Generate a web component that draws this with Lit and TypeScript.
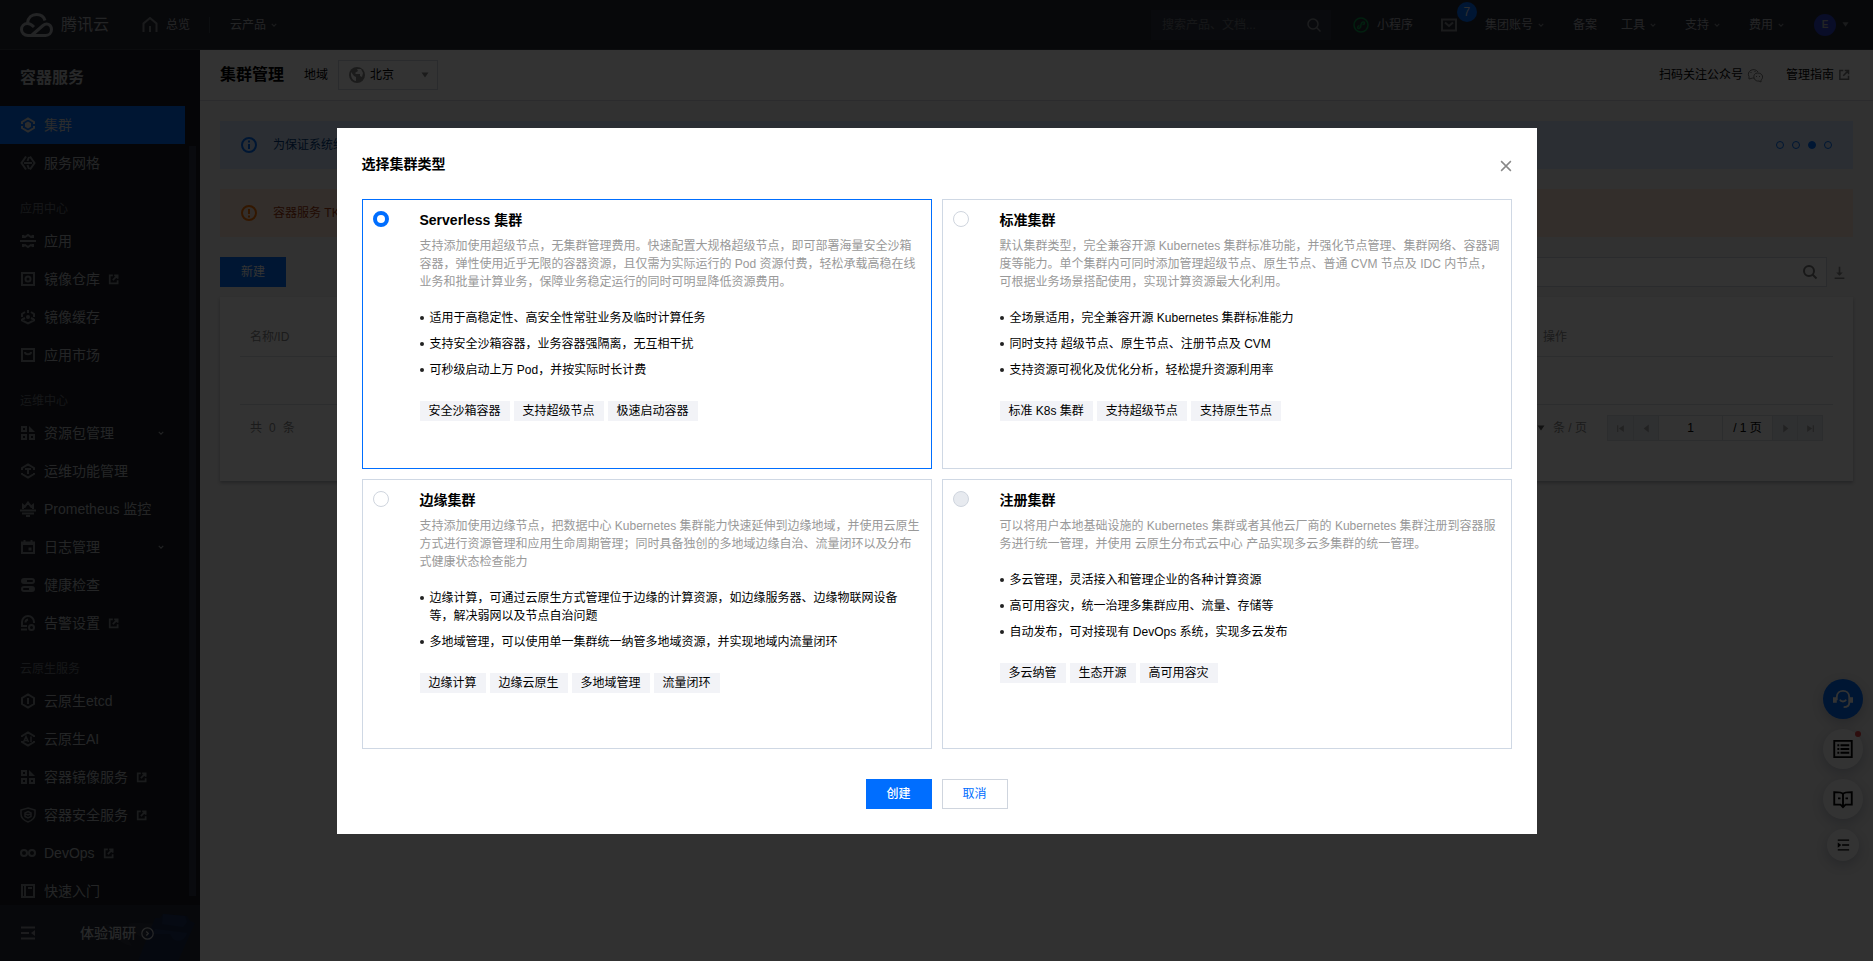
import { LitElement, html, css, svg, nothing, TemplateResult } from 'lit';
import { customElement, property, state } from 'lit/decorators.js';
import { classMap } from 'lit/directives/class-map.js';

const HEX = svg`<path d="M2 6V5l6-3.6L14 5v1M2 10v1l6 3.6 6-3.6v-1"/>`;
const GRID = svg`<path d="M2 2h4v4H2zM2 10h4v4H2zM10 10h4v4h-4z"/><path class="fill" d="M9 1l6 6H9z"/>`;

const ICONS: Record<string, unknown> = {
  cluster: svg`<path d="M2 7V5l6-3.6L14 5v2M2 9v2l6 3.6 6-3.6V9"/><path class="fill" d="M8 4.6l3 1.7v3.4l-3 1.7-3-1.7V6.3z"/>`,
  mesh: svg`<path d="M6 1.5L1.500 8 6 14.500M10 1.500L14.500 8 10 14.500M4 8h8M9 2L7.500 6M9 14l-1.500-4"/>`,
  app: svg`<path d="M0 8h16M3 2.500l2 1.500 3-2 3 2 2-1.500M3 5V2M13 5V2M3 13.500l2-1.500 3 2 3-2 2 1.500M3 11v3M13 11v3"/>`,
  registry: svg`<path d="M2 2h12v12H2z"/><circle cx="8" cy="8" r="2.5"/>`,
  cache: svg`<path d="M2 8V5l3-2M11 3l3 2v3M2 10.500L5 9M14 10.500L11 9M2 10v1.500l6 3 6-3V10M8 1v3"/><circle class="fill" cx="8" cy="8" r="2"/>`,
  market: svg`<path d="M2 2h12v12H2zM5 5c0 3 6 3 6 0"/>`,
  grid: GRID,
  ops: svg`${HEX}<path d="M2 5v2M14 5v2M5 6h6M8 6v5"/>`,
  prom: svg`<path d="M3 8V4l2 1.500L8 1.500 11 5.500 13 4v4M0 9.500h16M2 12.500h12M6 15h4"/>`,
  log: svg`<path d="M2 3.500h12V14H2zM4.500 1v3M11.500 1v3M2 5h12"/><path class="fill" d="M8.500 8.500h3v3h-3z"/>`,
  health: svg`<rect x="2" y="2" width="12" height="4" rx="2"/><rect x="2" y="10" width="12" height="4" rx="2"/><path d="M2 4h5M9 12h5"/>`,
  alarm: svg`<path d="M2 12V7a6 6 0 0 1 12 0v1M1 14.500h6M2 11h5M5.500 7.500A3 3 0 0 1 8 4.500"/><circle cx="11.500" cy="12.500" r="2.500"/>`,
  etcd: svg`${HEX}<path d="M2 5v6M14 5v6M8 5v6"/>`,
  ai: svg`${HEX}<path stroke-width="1.5" d="M3.500 11L6 5.500 8.500 11M4.500 9.500h3M11 5.500V11"/>`,
  shield: svg`<path stroke-width="1.5" d="M8 1l7 2v4c0 4-3 6.500-7 8-4-1.500-7-4-7-8V3z"/><path stroke-width="1.5" d="M8 4.500l3 1.500v3.500L8 11 5 9.500V6zM5 6.500L8 8l3-1.500"/>`,
  devops: svg`<circle cx="4" cy="8" r="3"/><circle cx="12" cy="8" r="3"/>`,
  start: svg`<path d="M2 2h12v12H2zM5 2v12M8 5h4"/>`,
  external: svg`<path d="M7 2H2.500v11.500H14V9M9 2h5v5M13.500 2.500L7 9"/>`,
  home: svg`<path d="M1.500 15V6.500L8 1l6.500 5.500V15M8 9v6"/>`,
  search: svg`<circle cx="7" cy="7" r="5"/><path d="M10.500 10.500L14.500 14.500"/>`,
  mail: svg`<path d="M1 2.500h14v11H1zM4 5.500l4 3.500 4-3.500"/>`,
  mini: svg`<circle cx="8" cy="8" r="7"/><path d="M6.500 8.500c-3 1-2 3.500-.500 3 2.500-.500 1.500-2 2-4 .500-3 3.500-3 3.500-1.500 0 1-1 1.500-2 1.500"/>`,
  info: svg`<circle cx="8" cy="8" r="7"/><path d="M8 3.500v2M8 7v5"/>`,
  warn: svg`<circle cx="8" cy="8" r="7"/><path d="M8 4v5M8 10.500v2"/>`,
  globe: svg`<circle class="fill" cx="8" cy="8" r="8"/><path class="cut" d="M2 5l3 4 2 1v4C4 13.500 1.500 11 2 5zM8 2h4l2 4-1 4-2-1V7H7l-1-1 3-2z"/>`,
  download: svg`<path d="M8 1v9M2 15h12"/><path class="fill" d="M4 8h8l-4 4z"/>`,
  wechat: svg`<path d="M7 11c-1 0-2 0-3 .5L2 12V9.500A5 4.500 0 1 1 11 5"/><path d="M10.500 6c6 0 6 5.500 3.500 7v2l-2-1c-6 1-7-8-1.500-8z"/><path d="M9.500 9v1M12.500 9v1M4 5v1M8 4v1"/>`,
  collapse: svg`<path d="M1 2.500h14M1 8h8M1 13.500h14"/><path class="fill" d="M15 5v6l-4-3z"/>`,
  expand: svg`<path d="M2 2.500h13M7 8h8M2 13.500h13"/><path class="fill" d="M2 5v6l4-3z"/>`,
  next: svg`<circle cx="8" cy="8" r="7"/><path d="M6.500 5.500L9 8l-2.500 2.500"/>`,
  chevron: svg`<path d="M2 5l6 6 6-6"/>`,
  close: svg`<path d="M1.500 1.500l13 13M14.500 1.500l-13 13"/>`,
  caret: svg`<path class="fill" d="M1 3h14l-7 10z"/>`,
  first: svg`<path d="M3 2v12"/><path class="fill" d="M14 2v12L5 8z"/>`,
  prev: svg`<path class="fill" d="M12 1v14L3 8z"/>`,
  following: svg`<path class="fill" d="M4 1v14l9-7z"/>`,
  last: svg`<path d="M13 2v12"/><path class="fill" d="M2 2v12l9-6z"/>`,
  headset: svg`<path d="M3 9V6.500C3 3 5.500 1.500 8 1.500s5 1.500 5 5V11c0 3-2 3.500-4.500 3.500M5.500 8.500c1 2 4 2 5 0"/><path class="fill" d="M0 6.500h3V11H0zM13 6.500h3V11h-3z"/>`,
  list: svg`<path d="M1 1.500h14v13H1zM3.500 5h1.500M6 5h7M3.500 8h1.500M6 8h7M3.500 11h1.500M6 11h7"/>`,
  book: svg`<path d="M8 4C7 2.500 5 2.500 1 2.500v10h5l2 2 2-2h5v-10c-4 0-6 0-7 1.500zM8 4v10M4 7.500h2M10 7.500h2"/>`,
};

@customElement('ui-icon')
export class UiIcon extends LitElement {
  @property() name = '';
  @property({ type: Number }) size = 16;
  @property({ type: Number }) weight = 2;

  static styles = css`
    :host { display: inline-flex; flex: none; }
    svg { display: block; fill: none; stroke: currentColor; }
    .fill { fill: currentColor; stroke: none; }
    .cut { fill: #fff; stroke: none; }
  `;

  render() {
    return html`<svg width=${this.size} height=${this.size} viewBox="0 0 16 16" stroke-width=${this.weight} aria-hidden="true">${ICONS[this.name]}</svg>`;
  }
}

interface NavItem { icon: string; text: string; external?: boolean; sub?: boolean; active?: boolean }
interface NavGroup { label?: string; items: NavItem[] }
interface ClusterType { id: string; title: string; desc: string; points: string[]; tags: string[]; disabled?: boolean }

const NAV: NavGroup[] = [
  { items: [
    { icon: 'cluster', text: '集群', active: true },
    { icon: 'mesh', text: '服务网格' },
  ] },
  { label: '应用中心', items: [
    { icon: 'app', text: '应用' },
    { icon: 'registry', text: '镜像仓库', external: true },
    { icon: 'cache', text: '镜像缓存' },
    { icon: 'market', text: '应用市场' },
  ] },
  { label: '运维中心', items: [
    { icon: 'grid', text: '资源包管理', sub: true },
    { icon: 'ops', text: '运维功能管理' },
    { icon: 'prom', text: 'Prometheus 监控' },
    { icon: 'log', text: '日志管理', sub: true },
    { icon: 'health', text: '健康检查' },
    { icon: 'alarm', text: '告警设置', external: true },
  ] },
  { label: '云原生服务', items: [
    { icon: 'etcd', text: '云原生etcd' },
    { icon: 'ai', text: '云原生AI' },
    { icon: 'grid', text: '容器镜像服务', external: true },
    { icon: 'shield', text: '容器安全服务', external: true },
    { icon: 'devops', text: 'DevOps', external: true },
    { icon: 'start', text: '快速入门' },
  ] },
];

const TYPES: ClusterType[] = [
  {
    id: 'serverless', title: 'Serverless 集群',
    desc: '支持添加使用超级节点，无集群管理费用。快速配置大规格超级节点，即可部署海量安全沙箱容器，弹性使用近乎无限的容器资源，且仅需为实际运行的 Pod 资源付费，轻松承载高稳在线业务和批量计算业务，保障业务稳定运行的同时可明显降低资源费用。',
    points: ['适用于高稳定性、高安全性常驻业务及临时计算任务', '支持安全沙箱容器，业务容器强隔离，无互相干扰', '可秒级启动上万 Pod，并按实际时长计费'],
    tags: ['安全沙箱容器', '支持超级节点', '极速启动容器'],
  },
  {
    id: 'standard', title: '标准集群',
    desc: '默认集群类型，完全兼容开源 Kubernetes 集群标准功能，并强化节点管理、集群网络、容器调度等能力。单个集群内可同时添加管理超级节点、原生节点、普通 CVM 节点及 IDC 内节点，可根据业务场景搭配使用，实现计算资源最大化利用。',
    points: ['全场景适用，完全兼容开源 Kubernetes 集群标准能力', '同时支持 超级节点、原生节点、注册节点及 CVM', '支持资源可视化及优化分析，轻松提升资源利用率'],
    tags: ['标准 K8s 集群', '支持超级节点', '支持原生节点'],
  },
  {
    id: 'edge', title: '边缘集群',
    desc: '支持添加使用边缘节点，把数据中心 Kubernetes 集群能力快速延伸到边缘地域，并使用云原生方式进行资源管理和应用生命周期管理；同时具备独创的多地域边缘自治、流量闭环以及分布式健康状态检查能力',
    points: ['边缘计算，可通过云原生方式管理位于边缘的计算资源，如边缘服务器、边缘物联网设备等，解决弱网以及节点自治问题', '多地域管理，可以使用单一集群统一纳管多地域资源，并实现地域内流量闭环'],
    tags: ['边缘计算', '边缘云原生', '多地域管理', '流量闭环'],
  },
  {
    id: 'registered', title: '注册集群', disabled: true,
    desc: '可以将用户本地基础设施的 Kubernetes 集群或者其他云厂商的 Kubernetes 集群注册到容器服务进行统一管理，并使用 云原生分布式云中心 产品实现多云多集群的统一管理。',
    points: ['多云管理，灵活接入和管理企业的各种计算资源', '高可用容灾，统一治理多集群应用、流量、存储等', '自动发布，可对接现有 DevOps 系统，实现多云发布'],
    tags: ['多云纳管', '生态开源', '高可用容灾'],
  },
];

@customElement('app-root')
export class AppRoot extends LitElement {
  @state() private selected = 'serverless';

  static styles = css`
    :host {
      display: flex;
      flex-direction: column;
      position: relative;
      height: 100vh;
      overflow: hidden;
      font: 12px/18px "Liberation Sans", "Noto Sans CJK SC", sans-serif;
      color: #000;
      background: #f2f2f2;
    }
    * { box-sizing: border-box; }
    a { color: inherit; text-decoration: none; }
    button, input, select { font: inherit; color: inherit; margin: 0; padding: 0; border: 0; border-radius: 0; background: none; outline: none; }
    select { appearance: none; }
    h1, h2, h3, p, ul { margin: 0; padding: 0; }
    ul { list-style: none; }

    .topbar { display: flex; align-items: center; flex: none; height: 50px; padding: 0 24px 0 20px; background: #262a36; color: #b0b2b8; border-bottom: 1px solid #373c48; }
    .brand { display: flex; align-items: center; gap: 8px; font-size: 16px; }
    .topbar .home { display: flex; align-items: center; gap: 8px; margin-left: 33px; }
    .home ui-icon, .mail ui-icon { color: #83868c; }
    .rule { width: 1px; height: 16px; margin: 0 20px 0 19px; background: #3f4553; }
    .drop { display: flex; align-items: center; gap: 5px; padding-right: 5px; }
    .drop ui-icon { color: #83868c; }
    .find { display: flex; align-items: center; width: 180px; height: 30px; margin-left: auto; padding: 0 9px 0 11px; background: #303642; }
    .find input { flex: 1; min-width: 0; }
    .find input::placeholder { color: #6e727b; opacity: 1; }
    .find ui-icon { color: #8a8d94; }
    .mini { display: flex; align-items: center; gap: 8px; margin: 0 28px 0 22px; }
    .mini ui-icon { color: #0a9b4c; }
    .mail { display: flex; position: relative; margin-right: 28px; }
    .badge { position: absolute; left: 16px; top: -15px; width: 20px; height: 20px; border-radius: 10px; background: #006eff; color: #e0e4ea; text-align: center; line-height: 20px; }
    .links { display: flex; gap: 24px; }
    .avatar { display: flex; align-items: center; gap: 6px; margin-left: 25px; }
    .avatar ui-icon { color: #83868c; }
    .avatar b { width: 22px; height: 22px; border-radius: 11px; background: #2d41c8; text-align: center; font-size: 10px; line-height: 22px; }

    .body { display: flex; flex: 1; min-height: 0; }
    .side { display: flex; flex-direction: column; flex: none; width: 200px; background: #191d24; color: #b6b9be; }
    .side h2 { flex: none; padding: 16px 20px 16px; font-size: 16px; line-height: 24px; color: #c4c6ca; }
    .nav { display: flex; flex: 1; min-height: 0; overflow: hidden; }
    .menu { flex: 1; }
    .track { width: 7px; margin: 40px 4px 9px 4px; background: #2d3346; }
    .group { padding: 18px 20px 4px; color: #6c7078; }
    .item { display: flex; align-items: center; gap: 8px; height: 38px; padding: 0 20px; font-size: 14px; }
    .item ui-icon { color: #83868c; }
    .item .more { margin-left: auto; margin-right: 1px; color: #a8abb0; }
    .item.active { background: #006eff; color: #d5d9de; }
    .item.active ui-icon { color: #d5d9de; }
    .foot { display: flex; align-items: center; flex: none; height: 56px; padding-left: 20px; background: #242837; position: relative; overflow: hidden; }
    .foot button { display: flex; color: #8a8d94; }
    .survey { display: flex; position: relative; align-items: center; gap: 5px; margin-left: 44px; font-size: 14px; font-weight: 500; z-index: 1; color: #c4c6ca; }
    .art { position: absolute; right: 0; bottom: 0; }

    .main { flex: 1; min-width: 0; }
    .head { display: flex; align-items: center; height: 51px; padding: 0 23px 0 20px; background: #fff; border-bottom: 1px solid #d5d8de; }
    .head h1 { font-size: 16px; line-height: 24px; margin-right: 20px; }
    .region { display: flex; align-items: center; width: 100px; height: 30px; margin-left: 10px; padding: 0 8px 0 10px; border: 1px solid #cfd5de; color: #000; }
    .region ui-icon { color: #888; }
    .region select { flex: 1; min-width: 0; margin-left: 5px; }
    .follow { display: flex; align-items: center; gap: 4px; margin-left: auto; }
    .guide { display: flex; align-items: center; gap: 4px; margin-left: 23px; }
    .follow ui-icon, .guide ui-icon { color: #777; }

    .content { display: flex; flex-direction: column; gap: 20px; padding: 20px; }
    .alert { display: flex; align-items: center; gap: 16px; height: 48px; padding: 0 21px; background: #d5e7ff; color: #003b80; }
    .alert ui-icon { color: #006eff; }
    .alert.orange { background: #ffe6d7; color: #a3380c; }
    .alert.orange ui-icon { color: #ff7200; }
    .dots { display: flex; gap: 8px; margin-left: auto; }
    .dots button { width: 8px; height: 8px; border: 1px solid #006eff; border-radius: 4px; }
    .dots .on { background: #006eff; }
    .tools { display: flex; align-items: center; gap: 6px; }
    .btn { width: 66px; height: 30px; border: 1px solid #cfd5de; text-align: center; color: #006eff; background: #fff; }
    .btn.primary { border-color: #006eff; background: #006eff; color: #fff; }
    .filter { display: flex; align-items: center; width: 420px; height: 30px; margin-left: auto; padding: 0 8px; border: 1px solid #cfd5de; background: #fff; }
    .filter input { flex: 1; min-width: 0; }
    .filter ui-icon { color: #777; }
    .tools > button:last-child { display: flex; margin-right: 7px; color: #888; }

    .panel { margin-top: -10px; padding: 20px 20px 30px; background: #fff; box-shadow: 0 2px 3px rgba(54, 58, 80, .32); }
    table { width: 100%; border-collapse: separate; border-spacing: 0; }
    th { height: 40px; padding: 0 10px; text-align: left; font-weight: 400; color: #888; border-bottom: 1px solid #dcdfe5; }
    .ops { width: 300px; }
    td { height: 48px; padding: 0; border-bottom: 1px solid #dcdfe5; }
    .pager { display: flex; align-items: center; padding: 10px; color: #888; }
    .total { display: flex; gap: 7px; }
    .size { display: flex; align-items: center; gap: 3px; margin-left: auto; }
    .size ui-icon { color: #555; margin-right: 5px; }
    .pages { display: flex; height: 26px; margin-left: 20px; border: 1px solid #dcdfe5; color: #000; }
    .pages > * { border-left: 1px solid #dcdfe5; }
    .pages > :first-child { border-left: 0; }
    .pages button { display: flex; align-items: center; justify-content: center; width: 25px; background: #eaeef5; color: #aaa; }
    .pages input { width: 64px; text-align: center; }
    .pages span { width: 50px; text-align: center; line-height: 24px; }

    .floats { position: absolute; right: 10px; bottom: 100px; display: flex; flex-direction: column; align-items: center; gap: 10px; }
    .floats button { display: flex; align-items: center; justify-content: center; position: relative; width: 40px; height: 40px; border-radius: 20px; background: #fff; box-shadow: 0 4px 12px rgba(0, 20, 60, .2); }
    .floats .call { background: #006eff; color: #fff; }
    .floats .small { width: 32px; height: 32px; border-radius: 16px; }
    .floats i { position: absolute; right: 2px; top: 2px; width: 6px; height: 6px; border-radius: 3px; background: #e54545; }

    .mask { position: absolute; inset: 0; z-index: 10; display: flex; align-items: center; justify-content: center; background: rgba(0, 0, 0, .8); }
    .dialog { width: 1200px; max-width: 96%; padding: 25px; background: #fff; }
    .dialog header { display: flex; align-items: flex-end; justify-content: space-between; margin-bottom: 24px; }
    .dialog h2 { font-size: 14px; line-height: 22px; }
    .dialog header button { display: flex; padding: 3px 0; color: #888; }
    .cards { display: grid; grid-template-columns: 1fr 1fr; grid-auto-rows: minmax(270px, auto); gap: 10px; }
    .card { display: flex; align-items: flex-start; gap: 31px; padding: 11px 10px 10px; border: 1px solid #cfd8e4; }
    .card.on { border-color: #006eff; }
    .card input { appearance: none; flex: none; width: 16px; height: 16px; border: 1px solid #cfd5de; border-radius: 8px; background: #fff; }
    .card input:checked { border: 4px solid #006eff; }
    .card input:disabled { background: #e7eaef; }
    .card h3 { margin-bottom: 8px; font-size: 14px; line-height: 18px; }
    .desc { color: #999; margin-bottom: 18px; }
    .card li { display: flex; gap: 6px; margin-bottom: 8px; }
    .card li::before { content: ""; flex: none; width: 4px; height: 4px; margin-top: 7px; border-radius: 2px; background: #222; }
    .tags { display: flex; gap: 4px; margin-top: 22px; }
    .tags span { padding: 0 9px; line-height: 20px; background: #f2f3f7; }
    .dialog footer { display: flex; justify-content: center; gap: 10px; margin-top: 30px; }
    .dialog .primary { font-weight: 500; }
  `;

  private drop(text: string): TemplateResult {
    return html`<a class="drop" href="#">${text}<ui-icon name="chevron" size="6" weight="3"></ui-icon></a>`;
  }

  private topbar() {
    return html`<header class="topbar">
      <a class="brand" href="#">
        <svg width="33" height="24" viewBox="0 0 33 24" fill="none" stroke="currentColor" stroke-width="3" aria-hidden="true">
          <path d="M12 22L23 12.500C27 9 31.500 12 31.500 16.500 31.500 20 29 22.500 25.500 22.500H8C4 22.500 1.500 19.500 1.500 16.500 1.500 13 4 10.500 7.500 10.500c2.500 0 4 1 6.500 3.500M7.500 10C8 4.500 12 1.500 16.500 1.500c4.500 0 7.500 2.500 8.500 6"/>
        </svg>腾讯云</a>
      <a class="home" href="#"><ui-icon name="home" weight="2"></ui-icon>总览</a>
      <span class="rule"></span>
      ${this.drop('云产品')}
      <label class="find"><input type="search" aria-label="搜索" placeholder="搜索产品、文档..."><ui-icon name="search" weight="1.5"></ui-icon></label>
      <a class="mini" href="#"><ui-icon name="mini" weight="1.5"></ui-icon>小程序</a>
      <a class="mail" href="#" aria-label="站内信"><ui-icon name="mail" weight="2"></ui-icon><span class="badge">7</span></a>
      <nav class="links">${this.drop('集团账号')}<a href="#">备案</a>${this.drop('工具')}${this.drop('支持')}${this.drop('费用')}</nav>
      <a class="avatar" href="#"><b>E</b><ui-icon name="caret" size="7"></ui-icon></a>
    </header>`;
  }

  private sidebar() {
    return html`<aside class="side">
      <h2>容器服务</h2>
      <div class="nav">
        <nav class="menu">
          ${NAV.map((g) => html`
            ${g.label ? html`<div class="group">${g.label}</div>` : nothing}
            ${g.items.map((i) => html`<a href="#" class=${classMap({ item: true, active: !!i.active })}>
              <ui-icon name=${i.icon} weight="2"></ui-icon>${i.text}
              ${i.external ? html`<ui-icon name="external" size="11" weight="2.5"></ui-icon>` : nothing}
              ${i.sub ? html`<ui-icon class="more" name="chevron" size="6" weight="3"></ui-icon>` : nothing}
            </a>`)}`)}
        </nav>
        <div class="track"></div>
      </div>
      <div class="foot">
        <button aria-label="收起菜单"><ui-icon name="collapse" weight="2"></ui-icon></button>
        <a class="survey" href="#">体验调研<ui-icon name="next" size="13" weight="1.5"></ui-icon></a>
        <svg class="art" width="100" height="56" viewBox="0 0 100 56" aria-hidden="true">
          <path fill="#303544" d="M5 19l5 1 8 9c5 3 10 3 14 12-12-2-20-11-27-22z"/>
          <path fill="#303544" d="M28 19c10-3 18 1 28-1l-4 14H42c-6-2-10-6-14-13z"/>
          <path fill="#1b2a4e" d="M55 13h5l3-4 24 2 3 5 5 2-17 38H38z"/>
          <path fill="#1f355f" d="M63 9l22 2 2 6-4 5-21-3zM55 24l32 4c-2 7-8 10-14 6l-3-5-17 0z"/>
        </svg>
      </div>
    </aside>`;
  }

  private page() {
    return html`<main class="main">
      <div class="head">
        <h1>集群管理</h1>
        <label for="region">地域</label>
        <div class="region"><ui-icon name="globe"></ui-icon><select id="region"><option>北京</option></select><ui-icon name="caret" size="8"></ui-icon></div>
        <a class="follow" href="#">扫码关注公众号<ui-icon name="wechat" weight="1"></ui-icon></a>
        <a class="guide" href="#">管理指南<ui-icon name="external" size="12"></ui-icon></a>
      </div>
      <div class="content">
        <div class="alert"><ui-icon name="info"></ui-icon><span>为保证系统维护</span>
          <div class="dots">${[0, 1, 2, 3].map((n) => html`<button class=${n === 2 ? 'on' : ''} aria-label="第 ${n + 1} 条"></button>`)}</div>
        </div>
        <div class="alert orange"><ui-icon name="warn"></ui-icon><span>容器服务 TKE</span></div>
        <div class="tools">
          <button class="btn primary">新建</button>
          <label class="filter"><input type="text" aria-label="筛选集群"><ui-icon name="search"></ui-icon></label>
          <button aria-label="下载"><ui-icon name="download" size="13"></ui-icon></button>
        </div>
        <section class="panel">
          <table>
            <thead><tr><th>名称/ID</th><th class="ops">操作</th></tr></thead>
            <tbody><tr><td colspan="2"></td></tr></tbody>
          </table>
          <div class="pager">
            <div class="total"><span>共</span><span>0</span><span>条</span></div>
            <div class="size"><select aria-label="每页条数"><option>20</option></select><ui-icon name="caret" size="8"></ui-icon>条 / 页</div>
            <div class="pages">
              <button aria-label="第一页"><ui-icon name="first" size="9"></ui-icon></button>
              <button aria-label="上一页"><ui-icon name="prev" size="9"></ui-icon></button>
              <input aria-label="页码" .value=${'1'}>
              <span>/ 1 页</span>
              <button aria-label="下一页"><ui-icon name="following" size="9"></ui-icon></button>
              <button aria-label="最后一页"><ui-icon name="last" size="9"></ui-icon></button>
            </div>
          </div>
        </section>
      </div>
    </main>`;
  }

  private card(t: ClusterType) {
    return html`<label class=${classMap({ card: true, on: this.selected === t.id })}>
      <input type="radio" name="type" .checked=${this.selected === t.id} ?disabled=${!!t.disabled} @change=${() => { this.selected = t.id; }}>
      <div>
        <h3>${t.title}</h3>
        <p class="desc">${t.desc}</p>
        <ul>${t.points.map((p) => html`<li><span>${p}</span></li>`)}</ul>
        <div class="tags">${t.tags.map((x) => html`<span>${x}</span>`)}</div>
      </div>
    </label>`;
  }

  render() {
    return html`
      ${this.topbar()}
      <div class="body">${this.sidebar()}${this.page()}</div>
      <div class="floats">
        <button class="call" aria-label="在线客服"><ui-icon name="headset" size="20" weight="1.5"></ui-icon></button>
        <button aria-label="清单"><ui-icon name="list" size="20" weight="1.5"></ui-icon><i></i></button>
        <button aria-label="文档"><ui-icon name="book" size="20" weight="1.5"></ui-icon></button>
        <button class="small" aria-label="收起"><ui-icon name="expand" size="14" weight="1.5"></ui-icon></button>
      </div>
      <div class="mask">
        <section class="dialog" role="dialog" aria-label="选择集群类型">
          <header><h2>选择集群类型</h2><button aria-label="关闭"><ui-icon name="close" size="12"></ui-icon></button></header>
          <div class="cards">${TYPES.map((t) => this.card(t))}</div>
          <footer><button class="btn primary">创建</button><button class="btn">取消</button></footer>
        </section>
      </div>`;
  }
}
